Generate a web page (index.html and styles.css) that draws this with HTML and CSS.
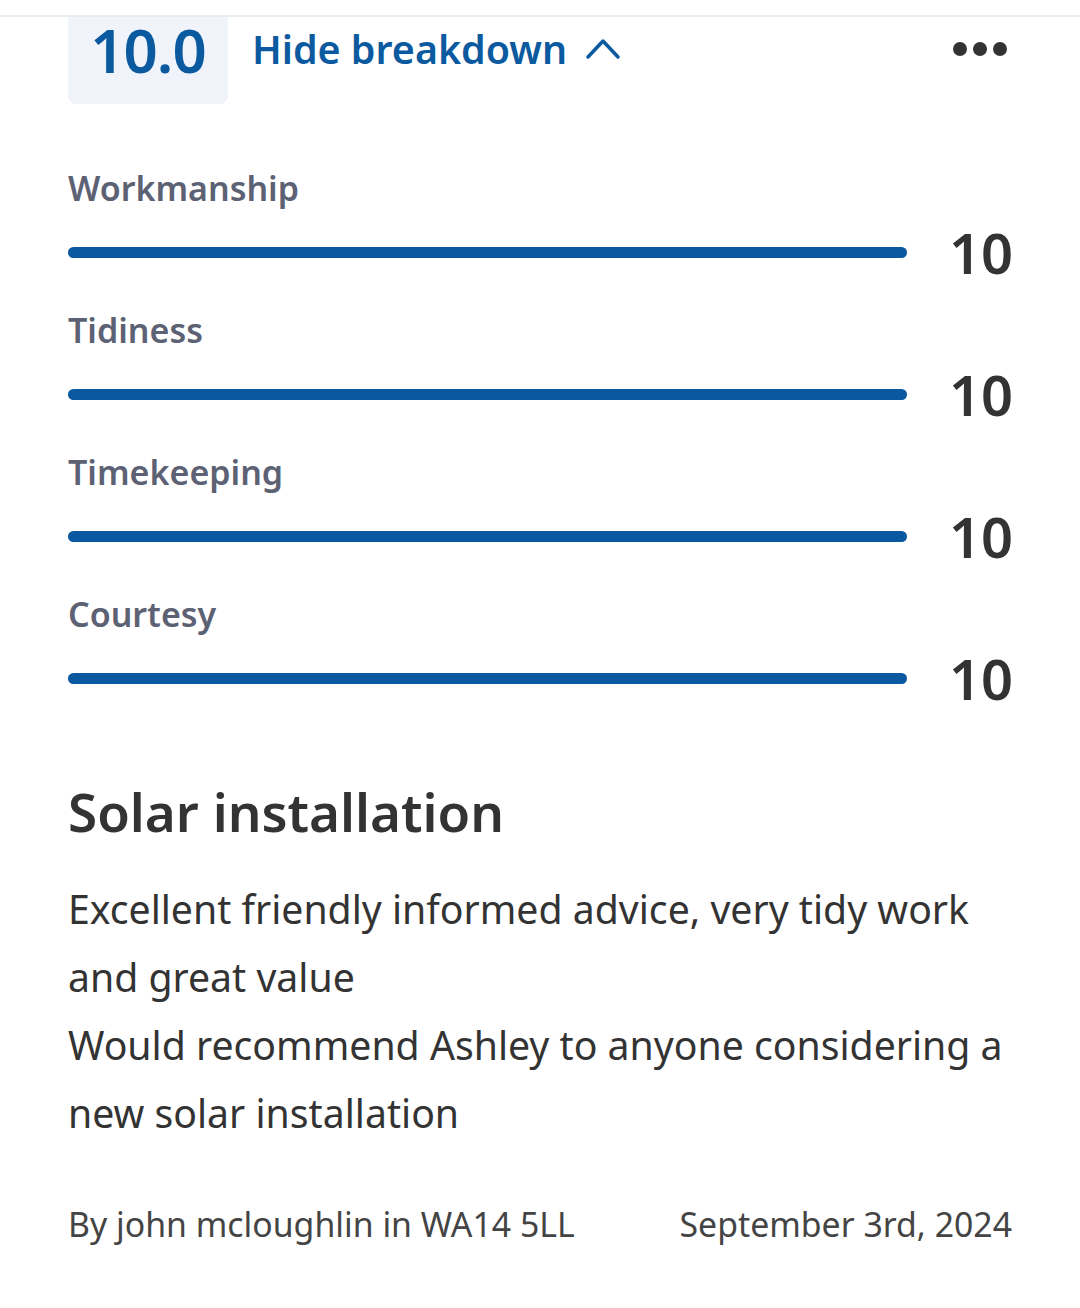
FILE: index.html
```html
<!DOCTYPE html>
<html lang="en">
<head>
<meta charset="utf-8">
<link rel="stylesheet" href="styles.css">
<title>Review</title>
</head>
<body>
<div class="topline"></div>
<main class="review">
  <header class="review-head">
    <div class="score">10.0</div>
    <button class="toggle">Hide breakdown
      <svg class="chev" width="36" height="24" viewBox="0 0 36 24"><path d="M3 21 L18 5 L33 21" fill="none" stroke="#0b5aa0" stroke-width="3.5" stroke-linecap="round" stroke-linejoin="round"/></svg>
    </button>
    <div class="more"><span></span><span></span><span></span></div>
  </header>

  <section class="breakdown">
    <div class="metric">
      <div class="metric-label">Workmanship</div>
      <div class="metric-row"><div class="bar"><div class="fill" style="width:100%"></div></div><div class="metric-val">10</div></div>
    </div>
    <div class="metric">
      <div class="metric-label">Tidiness</div>
      <div class="metric-row"><div class="bar"><div class="fill" style="width:100%"></div></div><div class="metric-val">10</div></div>
    </div>
    <div class="metric">
      <div class="metric-label">Timekeeping</div>
      <div class="metric-row"><div class="bar"><div class="fill" style="width:100%"></div></div><div class="metric-val">10</div></div>
    </div>
    <div class="metric">
      <div class="metric-label">Courtesy</div>
      <div class="metric-row"><div class="bar"><div class="fill" style="width:100%"></div></div><div class="metric-val">10</div></div>
    </div>
  </section>

  <h2 class="title">Solar installation</h2>
  <p class="body">Excellent friendly informed advice, very tidy work and great value<br>Would recommend Ashley to anyone considering a new solar installation</p>

  <footer class="meta">
    <span>By john mcloughlin in WA14 5LL</span>
    <span>September 3rd, 2024</span>
  </footer>
</main>
</body>
</html>
```
FILE: styles.css
```css
* { box-sizing: border-box; }
html, body { margin: 0; padding: 0; background: #fff; }
body {
  font-family: "Noto Sans", "Open Sans", sans-serif;
  color: #333;
}
.topline { height: 17px; border-bottom: 2px solid #ececec; }
.review { padding: 0 68px; }
.review-head {
  display: flex;
  align-items: flex-start;
  height: 87px;
}
.score {
  width: 160px;
  height: 87px;
  background: #f0f4fa;
  border-radius: 0 0 8px 8px;
  color: #0b5aa0;
  font-size: 60px;
  font-weight: 600;
  line-height: 66px;
  text-align: center;
  letter-spacing: -1px;
}
.toggle {
  display: flex;
  align-items: center;
  gap: 18px;
  border: 0;
  background: none;
  padding: 0 0 0 24px;
  margin: 0;
  font-family: inherit;
  font-size: 39.4px;
  font-weight: 600;
  color: #0b5aa0;
  height: 64px;
}
.chev { display: block; margin-top: -2px; }
.more {
  margin-left: auto;
  display: flex;
  gap: 6px;
  padding-top: 25px;
  padding-right: 5px;
}
.more span {
  width: 14px; height: 14px; border-radius: 50%; background: #333;
}
.breakdown { padding-top: 59px; }
.metric { height: 142px; }
.metric-label {
  font-size: 34px;
  font-weight: 600;
  color: #5c6274;
  line-height: 50px;
  height: 50px;
}
.metric-row {
  display: flex;
  align-items: center;
  gap: 42px;
  height: 78px;
}
.bar {
  flex: 1;
  height: 11px;
  border-radius: 6px;
  background: #e4e8ee;
}
.fill { height: 100%; border-radius: 6px; background: #0a58a0; }
.metric-val {
  font-size: 56px;
  font-weight: 600;
  color: #333;
  line-height: 58px;
  width: 60px;
  margin-right: 3px;
  text-align: right;
}
.title {
  margin: 0;
  padding-top: 41px;
  font-size: 53px;
  font-weight: 600;
  line-height: 80px;
  color: #333;
}
.body {
  margin: 23px 0 0;
  font-size: 39.2px;
  line-height: 68px;
  color: #333;
}
.meta {
  display: flex;
  justify-content: space-between;
  margin-top: 54px;
  font-size: 33.8px;
  line-height: 46px;
  color: #444;
}
```
